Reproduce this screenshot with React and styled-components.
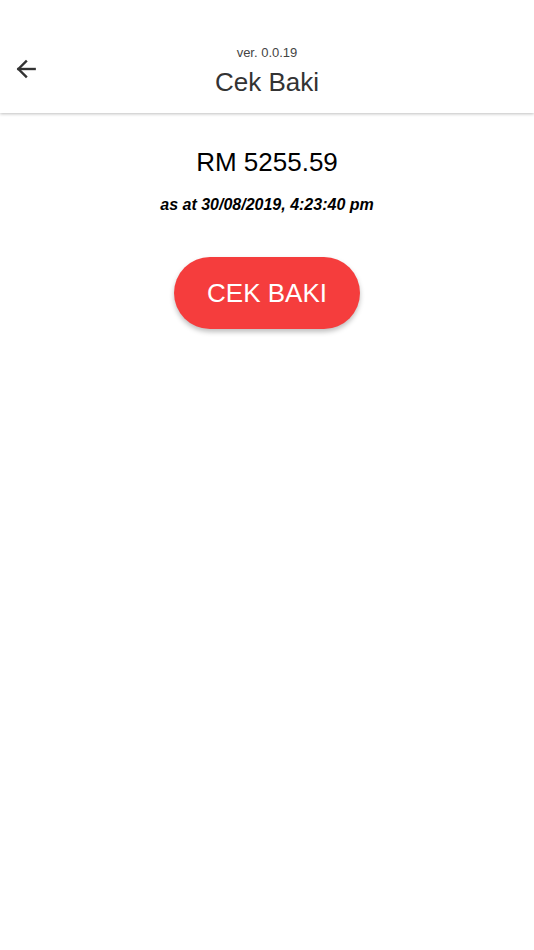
import React from 'react'
import styled, { createGlobalStyle } from 'styled-components'

const GlobalStyle = createGlobalStyle`
  html, body {
    margin: 0;
    padding: 0;
    background: #fff;
    font-family: "Liberation Sans", Arial, sans-serif;
  }
`;

const Page = styled.div`
  width: 534px;
  min-height: 950px;
  background: #fff;
`;

const Header = styled.header`
  position: relative;
  height: 113px;
  display: flex;
  align-items: flex-end;
  justify-content: center;
  padding-bottom: 16px;
  box-sizing: border-box;
  background: #fff;
  box-shadow: 0 1px 3px rgba(0, 0, 0, 0.25);
`;

const BackButton = styled.button`
  position: absolute;
  left: 10px;
  top: 53px;
  width: 32px;
  height: 32px;
  padding: 0;
  border: none;
  background: none;
  display: flex;
  align-items: center;
  justify-content: center;
`;

const TitleBlock = styled.div`
  display: flex;
  flex-direction: column;
  align-items: center;
`;

const Version = styled.div`
  font-size: 13px;
  color: #444;
  line-height: 16px;
  margin-bottom: 2px;
`;

const Title = styled.h1`
  margin: 4px 0 0;
  font-size: 26px;
  font-weight: 400;
  color: #333;
  line-height: 30px;
`;

const Content = styled.main`
  display: flex;
  flex-direction: column;
  align-items: center;
  padding-top: 32px;
`;

const Balance = styled.div`
  font-size: 26px;
  color: #000;
  line-height: 34px;
`;

const AsAt = styled.div`
  margin-top: 16px;
  font-size: 16px;
  font-weight: 700;
  font-style: italic;
  color: #000;
  line-height: 20px;
`;

const CheckButton = styled.button`
  margin-top: 42px;
  width: 186px;
  height: 72px;
  border: none;
  border-radius: 36px;
  background: #f53d3d;
  color: #fff;
  font-family: "Liberation Sans", Arial, sans-serif;
  font-size: 26px;
  box-shadow: 0 3px 5px rgba(0, 0, 0, 0.25);
`;

const BackArrow = () => (
  <svg width="26" height="26" viewBox="0 0 24 24" fill="none" stroke="#333" strokeWidth="2.2" strokeLinecap="square">
    <path d="M20 12H5" />
    <path d="M12 5l-7 7 7 7" />
  </svg>
);

const App = () => (
  <Page>
    <GlobalStyle />
    <Header>
      <BackButton aria-label="Back">
        <BackArrow />
      </BackButton>
      <TitleBlock>
        <Version>ver. 0.0.19</Version>
        <Title>Cek Baki</Title>
      </TitleBlock>
    </Header>
    <Content>
      <Balance>RM 5255.59</Balance>
      <AsAt>as at 30/08/2019, 4:23:40 pm</AsAt>
      <CheckButton>CEK BAKI</CheckButton>
    </Content>
  </Page>
)

export default App
